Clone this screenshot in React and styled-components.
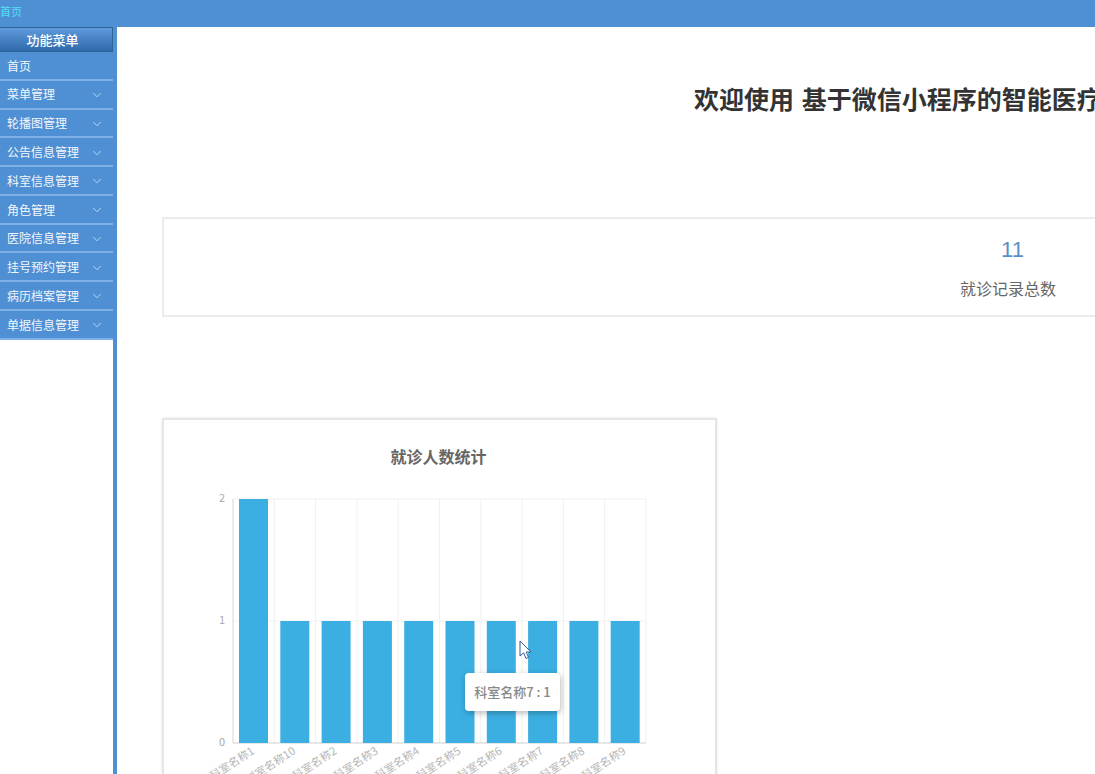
import styled, { createGlobalStyle } from "styled-components";
import { ChevronDown } from "lucide-react";

const GlobalStyle = createGlobalStyle`
  html, body {
    margin: 0;
    height: 100%;
    overflow: hidden;
    background: #fff;
    font-family: "Noto Sans CJK SC", "Liberation Sans", sans-serif;
  }
`;

const Page = styled.div`
  width: 1095px;
  height: 774px;
  overflow: hidden;
  display: flex;
  flex-direction: column;
`;

const TopBar = styled.div`
  flex: 0 0 27px;
  background: #4f8fd3;
  color: #4fe0f5;
  font-size: 11px;
  line-height: 22px;
`;

const Body = styled.div`
  flex: 1;
  display: flex;
  min-height: 0;
`;

const Sidebar = styled.aside`
  flex: 0 0 113px;
  border-right: 4px solid #4f8fd3;
  background: #fff;
`;

const MenuTitle = styled.div`
  height: 23px;
  padding-right: 7px;
  background: linear-gradient(#5f9bdc, #2f6bab);
  border: 1px solid #2f6398;
  border-left: 0;
  color: #fff;
  font-size: 13px;
  font-weight: 500;
  line-height: 24px;
  text-align: center;
`;

const MenuItem = styled.div`
  height: 26.2px;
  border-bottom: 2px solid #7fb0e6;
  background: #4f8fd3;
  color: #f2f7fd;
  font-size: 12px;
  line-height: 26px;
  padding: 0.6px 9px 0 7px;
  display: flex;
  align-items: center;
  justify-content: space-between;
  svg {
    color: #bcdcfa;
    margin-top: 1px;
  }
`;

const Main = styled.main`
  flex: 1;
  min-width: 0;
  padding: 0 0 0 45px;
`;

const Heading = styled.h1`
  margin: 0;
  padding: 51px 0 0 532px;
  width: 1400px;
  color: #333;
  font-size: 25px;
  font-weight: 700;
  line-height: 40px;
  word-spacing: 2px;
  white-space: nowrap;
`;

const StatCard = styled.section`
  box-sizing: border-box;
  width: 1694px;
  height: 100px;
  margin-top: 99px;
  border: 2px solid #ececec;
  background: #fff;
  text-align: center;
  padding-top: 17px;
`;

const StatNumber = styled.div`
  color: #5b8fc4;
  font-family: "Liberation Sans", sans-serif;
  font-size: 22px;
  line-height: 28px;
  padding-left: 7px;
`;

const StatLabel = styled.div`
  margin-top: 12px;
  padding-right: 2px;
  color: #666;
  font-size: 16px;
  line-height: 24px;
`;

const ChartCard = styled.section`
  box-sizing: border-box;
  position: relative;
  width: 555px;
  height: 420px;
  margin-top: 101px;
  border: 2px solid #e6e6e6;
  box-shadow: 0 0 2px rgba(0, 0, 0, 0.12);
  background: #fff;
`;

const ChartTitle = styled.h2`
  margin: 0;
  padding: 24px 2px 0 0;
  color: #666;
  font-size: 16px;
  font-weight: 700;
  line-height: 24px;
  text-align: center;
`;

const ChartSvg = styled.svg`
  display: block;
  margin-top: 5px;
`;

const Tip = styled.div`
  position: absolute;
  left: 301px;
  top: 253px;
  width: 95px;
  height: 38px;
  border-radius: 4px;
  background: #fff;
  box-shadow: 1px 2px 6px rgba(0, 0, 0, 0.28);
  color: #888;
  font-size: 13px;
  font-weight: 500;
  line-height: 38px;
  text-align: center;
  white-space: nowrap;
`;

const Cursor = styled.svg`
  position: absolute;
  left: 355px;
  top: 220px;
`;

const menus = [
  "菜单管理",
  "轮播图管理",
  "公告信息管理",
  "科室信息管理",
  "角色管理",
  "医院信息管理",
  "挂号预约管理",
  "病历档案管理",
  "单据信息管理",
];

const names = ["科室名称1", "科室名称10", "科室名称2", "科室名称3", "科室名称4", "科室名称5", "科室名称6", "科室名称7", "科室名称8", "科室名称9"];
const values = [2, 1, 1, 1, 1, 1, 1, 1, 1, 1];

// plot area inside the svg
const left = 69;
const right = 482;
const top = 26;
const middle = 148;
const bottom = 270;

function BarChart() {
  const step = (right - left) / names.length;
  return (
    <ChartSvg width="551" height="340" viewBox="0 0 551 340">
      {names.map((n, i) => (
        <line key={n} x1={left + step * (i + 1)} x2={left + step * (i + 1)} y1={top} y2={bottom} stroke="#f1f1f1" />
      ))}
      <line x1={left} x2={right} y1={top} y2={top} stroke="#f1f1f1" />
      <line x1={left} x2={right} y1={middle} y2={middle} stroke="#f1f1f1" />
      <line x1={left} x2={left} y1={top} y2={bottom} stroke="#d5d5d5" />
      <line x1={left} x2={right} y1={bottom} y2={bottom} stroke="#cfcfcf" />
      {[["2", top], ["1", middle], ["0", bottom]].map(([t, y]) => (
        <text key={t} x={left - 8} y={y + 3} textAnchor="end" fontSize="11" fill="#aaa">{t}</text>
      ))}
      {values.map((v, i) => {
        const h = (v / 2) * (bottom - top);
        return <rect key={names[i]} x={left + 6 + step * i} y={bottom - h} width="29" height={h} fill="#3cafe2" />;
      })}
      {names.map((n, i) => {
        const x = left + 22 + step * i;
        const y = bottom + 10;
        return (
          <text key={n} x={x} y={y} textAnchor="end" fontSize="11" fill="#b4b4b4" transform={`rotate(-33 ${x} ${y})`}>
            {n}
          </text>
        );
      })}
    </ChartSvg>
  );
}

export default function App() {
  return (
    <Page>
      <GlobalStyle />
      <TopBar>首页</TopBar>
      <Body>
        <Sidebar>
          <MenuTitle>功能菜单</MenuTitle>
          <MenuItem>首页</MenuItem>
          {menus.map((m) => (
            <MenuItem key={m}>
              {m}
              <ChevronDown size={14} strokeWidth={1.6} />
            </MenuItem>
          ))}
        </Sidebar>
        <Main>
          <Heading>欢迎使用 基于微信小程序的智能医疗挂号系统</Heading>
          <StatCard>
            <StatNumber>11</StatNumber>
            <StatLabel>就诊记录总数</StatLabel>
          </StatCard>
          <ChartCard>
            <ChartTitle>就诊人数统计</ChartTitle>
            <BarChart />
            <Tip>科室名称7 : 1</Tip>
            <Cursor width="14" height="22" viewBox="0 0 14 22">
              <path d="M1 1 L1 16 L4.6 12.8 L7 18.5 L9.6 17.4 L7.2 12 L12 12 Z" fill="#fff" stroke="#2f5f8f" strokeWidth="1" />
            </Cursor>
          </ChartCard>
        </Main>
      </Body>
    </Page>
  );
}
